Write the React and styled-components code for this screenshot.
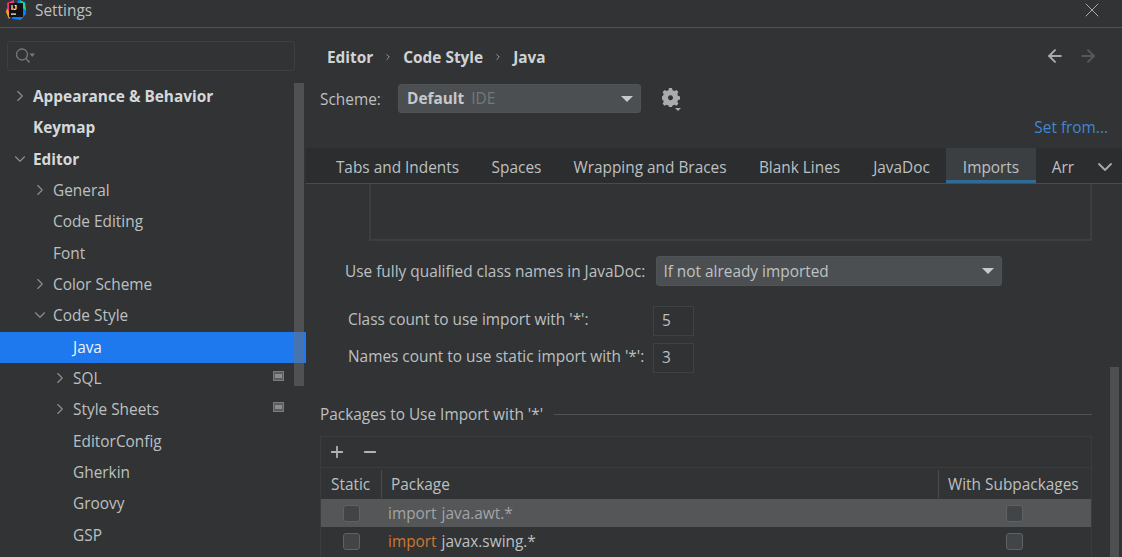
import styled, { createGlobalStyle } from "styled-components";
import { ChevronRight, ChevronDown, X, ArrowLeft, ArrowRight, Plus, Minus } from "lucide-react";

const Global = createGlobalStyle`
  html, body {
    margin: 0;
    height: 100%;
    background: #323334;
    overflow: hidden;
  }
  * { box-sizing: border-box; }
`;

const Window = styled.div`
  position: relative;
  width: 1122px;
  height: 557px;
  overflow: hidden;
  background: #323334;
  color: #c8ccce;
  font-family: "Open Sans", "Noto Sans", sans-serif;
  font-size: 15.4px;
  display: flex;
  flex-direction: column;
`;
const TitleBar = styled.div`
  height: 28px;
  flex: none;
  display: flex;
  align-items: center;
  padding: 0 18px 7px 6px;
  border-bottom: 1px solid #505254;
  gap: 9px;
`;
const TitleText = styled.span`
  flex: 1;
  color: #bcc0c2;
`;
const Body = styled.div`
  flex: 1;
  display: flex;
  min-height: 0;
`;
const Sidebar = styled.div`
  position: relative;
  width: 306px;
  flex: none;
  padding-top: 13px;
`;
const Search = styled.div`
  height: 30px;
  margin: 0 11px 0 7px;
  border: 1px solid #3d3f40;
  border-radius: 3px;
  display: flex;
  align-items: center;
  padding-left: 7px;
`;
const Tree = styled.div`
  margin-top: 10px;
  display: flex;
  flex-direction: column;
`;
const Row = styled.div`
  height: 31.33px;
  flex: none;
  display: flex;
  align-items: center;
  padding-left: ${(p) => p.$indent}px;
  position: relative;
  font-weight: ${(p) => (p.$bold ? 700 : 400)};
  color: ${(p) => (p.$selected ? "#eef4fb" : p.$bold ? "#d5d8da" : "#bcc0c2")};
  background: ${(p) => (p.$selected ? "#1e79ee" : "transparent")};
`;
const Arrow = styled.span`
  position: absolute;
  left: ${(p) => p.$indent - 22}px;
  top: 6px;
  display: flex;
  color: #8c8e90;
`;
const ProjectBadge = styled.span`
  position: absolute;
  right: 22px;
  top: 8px;
  width: 11px;
  height: 10px;
  background: #5a5d5f;
  border: 1px solid #7a7d7f;
  display: flex;
  align-items: center;
  justify-content: center;
  &::after {
    content: "";
    width: 7px;
    height: 4px;
    background: #8a8d8f;
  }
`;
const TreeScroll = styled.div`
  position: absolute;
  left: 294px;
  top: 55px;
  width: 10px;
  height: 303px;
  background: rgba(110, 112, 114, 0.5);
`;
const Main = styled.div`
  flex: 1;
  min-width: 0;
  position: relative;
  display: flex;
  flex-direction: column;
`;
const Crumbs = styled.div`
  height: 56px;
  flex: none;
  display: flex;
  align-items: center;
  padding: 2px 24px 0 21px;
  font-weight: 700;
  color: #d0d3d5;
`;
const CrumbSep = styled.span`
  width: 30px;
  display: flex;
  justify-content: center;
  color: #b4b6b8;
`;
const NavArrows = styled.div`
  margin-left: auto;
  margin-top: -2px;
  display: flex;
  gap: 13px;
`;
const SchemeRow = styled.div`
  height: 29px;
  flex: none;
  display: flex;
  align-items: center;
  padding-left: 14px;
`;
const SchemeLabel = styled.span`
  width: 78px;
  padding-top: 2px;
  color: #bcc0c2;
`;
const Combo = styled.div`
  width: ${(p) => p.$width}px;
  height: ${(p) => p.$height}px;
  border-radius: 3px;
  background: #4c4f51;
  border: 1px solid #505355;
  display: flex;
  align-items: center;
  padding: 0 7px 0 ${(p) => p.$pad}px;
  color: #bfc2c4;
`;
const ComboBold = styled.b`
  color: #c6c8ca;
  margin-right: 7px;
`;
const Muted = styled.span`
  color: #75787a;
`;
const Caret = styled.span`
  margin-left: auto;
  width: 0;
  height: 0;
  border-left: 6px solid transparent;
  border-right: 6px solid transparent;
  border-top: 6px solid #c6c8ca;
`;
const GearWrap = styled.span`
  margin-left: 21px;
  display: flex;
`;
const SetFrom = styled.div`
  height: 21px;
  margin-top: 5px;
  flex: none;
  text-align: right;
  padding-right: 14px;
  color: #3f87d6;
  line-height: 20px;
`;
const Tabs = styled.div`
  height: 36px;
  margin-top: 9px;
  flex: none;
  display: flex;
  align-items: stretch;
  background: #2c2d2e;
  border-bottom: 1px solid #4a4c4e;
  padding-left: 14px;
  position: relative;
`;
const Tab = styled.div`
  width: ${(p) => p.$width}px;
  flex: none;
  padding-top: 3px;
  display: flex;
  align-items: center;
  justify-content: center;
  color: #bcc0c2;
  background: ${(p) => (p.$active ? "#3c3f41" : "transparent")};
  box-shadow: ${(p) => (p.$active ? "inset 0 -3px 0 #2e6b96" : "none")};
`;
const TabMore = styled.div`
  position: absolute;
  left: 787px;
  top: 7px;
  display: flex;
  color: #a8aaac;
`;
const Pane = styled.div`
  flex: 1;
  min-height: 0;
  padding-left: 14px;
  padding-right: 30px;
  display: flex;
  flex-direction: column;
`;
const TopBox = styled.div`
  height: 57px;
  flex: none;
  margin-left: 49px;
  border-left: 2px solid #3c3e3f;
  border-bottom: 2px solid #3c3e3f;
  border-right: 2px solid #3c3e3f;
`;
const JavaDocRow = styled.div`
  margin-top: 15px;
  height: 30px;
  flex: none;
  display: flex;
  align-items: center;
  padding-left: 25px;
  gap: 11px;
  color: #bcc0c2;
`;
const CountRow = styled.div`
  height: 31px;
  flex: none;
  margin-top: ${(p) => p.$top}px;
  padding-left: 28px;
  display: flex;
  align-items: center;
  color: #bcc0c2;
`;
const CountLabel = styled.span`
  width: 305px;
  padding-bottom: 2px;
  white-space: nowrap;
`;
const NumberBox = styled.div`
  width: 41px;
  height: 30px;
  border: 1px solid #3f4142;
  padding-left: 8px;
  display: flex;
  align-items: center;
  background: #313233;
`;
const GroupTitle = styled.div`
  margin-top: 30px;
  height: 22px;
  flex: none;
  display: flex;
  align-items: center;
  gap: 11px;
  color: #bcc0c2;
  &::after {
    content: "";
    flex: 1;
    height: 1px;
    background: #505254;
  }
`;
const Table = styled.div`
  margin-top: 11px;
  flex: 1;
  border: 1px solid #3a3c3d;
  border-bottom: 0;
  display: flex;
  flex-direction: column;
`;
const TableTools = styled.div`
  height: 31px;
  flex: none;
  display: flex;
  align-items: center;
  padding-left: 7px;
  gap: 15px;
  color: #b0b2b4;
  border-bottom: 1px solid #3a3c3d;
`;
const Grid = styled.div`
  display: grid;
  grid-template-columns: 60px 1fr 153px;
  height: ${(p) => p.$height}px;
  flex: none;
  align-items: center;
  background: ${(p) => (p.$selected ? "#545658" : "transparent")};
`;
const HeadCell = styled.div`
  height: 28px;
  display: flex;
  align-items: center;
  padding-top: 2px;
  padding-left: ${(p) => p.$pad}px;
  border-left: ${(p) => (p.$line ? "1px solid #4b4d4f" : "0")};
  color: #bcc0c2;
`;
const Cell = styled.div`
  display: flex;
  align-items: center;
  justify-content: ${(p) => (p.$center ? "center" : "flex-start")};
  padding-left: ${(p) => p.$pad || 0}px;
`;
const Box = styled.span`
  width: 17px;
  height: 17px;
  border-radius: 3px;
  border: 1px solid #5f6264;
  background: #414547;
`;
const Keyword = styled.span`
  color: ${(p) => (p.$dim ? "#a2a4a6" : "#cc7832")};
  margin-right: 5px;
`;
const Code = styled.span`
  color: ${(p) => (p.$dim ? "#a2a4a6" : "#bcc0c2")};
`;
const MainScroll = styled.div`
  position: absolute;
  right: 3px;
  bottom: 0;
  width: 9px;
  height: 190px;
  background: #4d4f50;
`;

const rows = [
  { label: "Appearance & Behavior", indent: 33, bold: true, arrow: "right" },
  { label: "Keymap", indent: 33, bold: true },
  { label: "Editor", indent: 33, bold: true, arrow: "down" },
  { label: "General", indent: 53, arrow: "right" },
  { label: "Code Editing", indent: 53 },
  { label: "Font", indent: 53 },
  { label: "Color Scheme", indent: 53, arrow: "right" },
  { label: "Code Style", indent: 53, arrow: "down" },
  { label: "Java", indent: 73, selected: true },
  { label: "SQL", indent: 73, arrow: "right", badge: true },
  { label: "Style Sheets", indent: 73, arrow: "right", badge: true },
  { label: "EditorConfig", indent: 73 },
  { label: "Gherkin", indent: 73 },
  { label: "Groovy", indent: 73 },
  { label: "GSP", indent: 73 },
];

const tabs = [
  { label: "Tabs and Indents", width: 155 },
  { label: "Spaces", width: 83 },
  { label: "Wrapping and Braces", width: 184 },
  { label: "Blank Lines", width: 115 },
  { label: "JavaDoc", width: 89 },
  { label: "Imports", width: 90, active: true },
  { label: "Arr", width: 54 },
];

const Logo = () => (
  <svg width="20" height="20" viewBox="0 0 20 20">
    <path d="M1 3 L8 0 L8 12 L2 18 Z" fill="#f5317f" />
    <path d="M1 8 L5 16 L3 19 L0 12 Z" fill="#fd9f26" />
    <path d="M12 0 L19 2 L20 14 L15 20 L6 19 Z" fill="#087cfa" />
    <path d="M14 0 L19 3 L20 11 L15 6 Z" fill="#21d789" />
    <rect x="3" y="3" width="14" height="14" fill="#111" />
    <text x="5" y="10" fontSize="7" fontWeight="700" fill="#fff" fontFamily="Liberation Sans, sans-serif">IJ</text>
    <rect x="5" y="13.5" width="5" height="1.2" fill="#fff" />
  </svg>
);

const SearchIcon = () => (
  <svg width="22" height="18" viewBox="0 0 22 18" fill="none">
    <circle cx="7" cy="7.5" r="5.5" stroke="#75797b" strokeWidth="1.3" />
    <path d="M11 11.5 L14.5 15.5" stroke="#75797b" strokeWidth="1.5" />
    <path d="M14.5 6.5 H20 L17.2 10 Z" fill="#75797b" />
  </svg>
);

const Gear = () => (
  <svg width="20" height="24" viewBox="0 0 20 24">
    <path
      fillRule="evenodd"
      fill="#a9abad"
      d="M7 1 H10 L10.6 3.2 L12.4 4 L14.4 2.9 L16.4 5 L15.3 7 L16 8.8 L18 9.4 V12.4 L16 13 L15.3 14.8 L16.4 16.8 L14.4 18.8 L12.4 17.7 L10.6 18.5 L10 20 H7 L6.4 18.5 L4.6 17.7 L2.6 18.8 L0.6 16.8 L1.7 14.8 L1 13 L0 12.4 V9.4 L1 8.8 L1.7 7 L0.6 5 L2.6 2.9 L4.6 4 L6.4 3.2 Z M8.5 8.2 A2.5 2.5 0 1 0 8.51 8.2 Z"
    />
    <path d="M13 21 H19 L16 24 Z" fill="#a9abad" />
  </svg>
);

export default function App() {
  return (
    <Window>
      <Global />
      <TitleBar>
        <Logo />
        <TitleText>Settings</TitleText>
        <X size={24} strokeWidth={1} color="#a8aaac" />
      </TitleBar>
      <Body>
        <Sidebar>
          <Search>
            <SearchIcon />
          </Search>
          <Tree>
            {rows.map((r) => (
              <Row key={r.label} $indent={r.indent} $bold={r.bold} $selected={r.selected}>
                {r.arrow && (
                  <Arrow $indent={r.indent}>
                    {r.arrow === "right" ? (
                      <ChevronRight size={18} strokeWidth={1.5} />
                    ) : (
                      <ChevronDown size={18} strokeWidth={1.5} />
                    )}
                  </Arrow>
                )}
                {r.label}
                {r.badge && <ProjectBadge />}
              </Row>
            ))}
          </Tree>
          <TreeScroll />
        </Sidebar>
        <Main>
          <Crumbs>
            Editor
            <CrumbSep>
              <ChevronRight size={10} strokeWidth={1.8} />
            </CrumbSep>
            Code Style
            <CrumbSep>
              <ChevronRight size={10} strokeWidth={1.8} />
            </CrumbSep>
            Java
            <NavArrows>
              <ArrowLeft size={20} strokeWidth={2.4} color="#a8aaac" />
              <ArrowRight size={20} strokeWidth={2.4} color="#56585a" />
            </NavArrows>
          </Crumbs>
          <SchemeRow>
            <SchemeLabel>Scheme:</SchemeLabel>
            <Combo $width={243} $height={29} $pad={8}>
              <ComboBold>Default</ComboBold>
              <Muted>IDE</Muted>
              <Caret />
            </Combo>
            <GearWrap>
              <Gear />
            </GearWrap>
          </SchemeRow>
          <SetFrom>Set from...</SetFrom>
          <Tabs>
            {tabs.map((t) => (
              <Tab key={t.label} $width={t.width} $active={t.active}>
                {t.label}
              </Tab>
            ))}
            <TabMore>
              <ChevronDown size={24} strokeWidth={1.8} />
            </TabMore>
          </Tabs>
          <Pane>
            <TopBox />
            <JavaDocRow>
              Use fully qualified class names in JavaDoc:
              <Combo $width={346} $height={30} $pad={6}>
                If not already imported
                <Caret />
              </Combo>
            </JavaDocRow>
            <CountRow $top={19}>
              <CountLabel>Class count to use import with '*':</CountLabel>
              <NumberBox>5</NumberBox>
            </CountRow>
            <CountRow $top={6}>
              <CountLabel>Names count to use static import with '*':</CountLabel>
              <NumberBox>3</NumberBox>
            </CountRow>
            <GroupTitle>Packages to Use Import with '*'</GroupTitle>
            <Table>
              <TableTools>
                <Plus size={18} strokeWidth={2.4} />
                <Minus size={18} strokeWidth={2.4} />
              </TableTools>
              <Grid $height={31}>
                <HeadCell $pad={10}>Static</HeadCell>
                <HeadCell $pad={9} $line>Package</HeadCell>
                <HeadCell $pad={9} $line>With Subpackages</HeadCell>
              </Grid>
              <Grid $height={28} $selected>
                <Cell $center><Box /></Cell>
                <Cell $pad={7}><Keyword $dim>import</Keyword><Code $dim>java.awt.*</Code></Cell>
                <Cell $center><Box /></Cell>
              </Grid>
              <Grid $height={28}>
                <Cell $center><Box /></Cell>
                <Cell $pad={7}><Keyword>import</Keyword><Code>javax.swing.*</Code></Cell>
                <Cell $center><Box /></Cell>
              </Grid>
            </Table>
          </Pane>
          <MainScroll />
        </Main>
      </Body>
    </Window>
  );
}
